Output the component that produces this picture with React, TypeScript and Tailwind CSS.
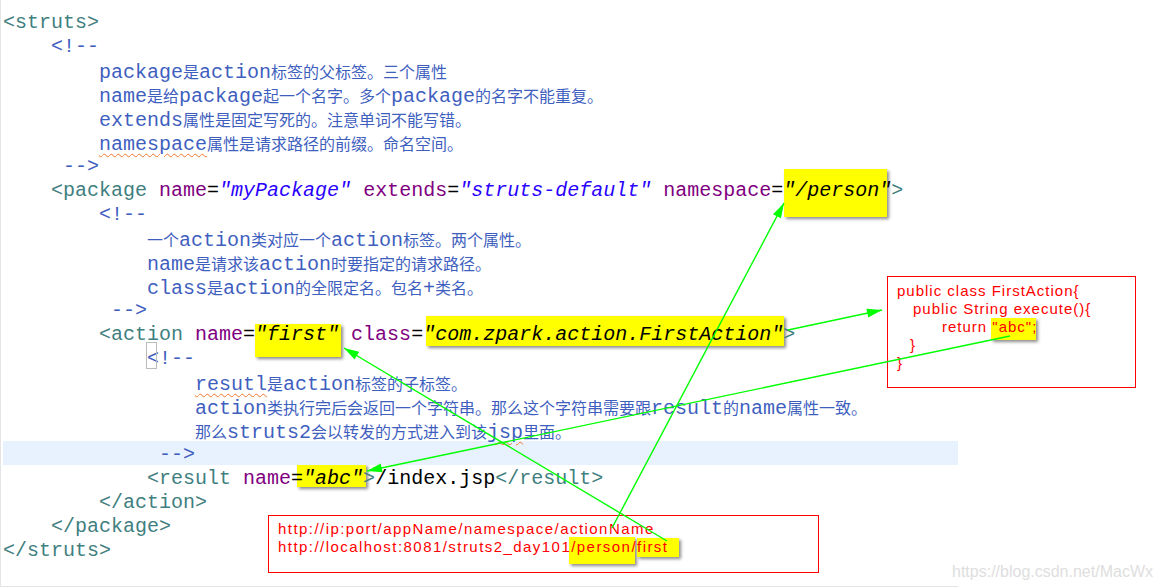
import React from "react";

const CJK = /([\u3000-\u303f\u4e00-\u9fff\uff00-\uffef]+)/;

function T({ children }: { children: React.ReactNode }) {
  return <span className="text-[#3f7f7f]">{children}</span>;
}

function A({ children }: { children: React.ReactNode }) {
  return <span className="text-[#7f007f]">{children}</span>;
}

function V({ children }: { children: React.ReactNode }) {
  return <span className="italic text-[#2a00ff]">{children}</span>;
}

// comment text: ascii in mono, chinese runs in the CJK font at 16px
function Cm({ t, wavy }: { t: string; wavy?: boolean }) {
  const parts = t.split(CJK).filter(Boolean);
  return (
    <span
      className={
        wavy
          ? "text-[#3f5fbf] underline decoration-wavy decoration-[#f0782e] decoration-1 underline-offset-[3px]"
          : "text-[#3f5fbf]"
      }
    >
      {parts.map((p, k) =>
        CJK.test(p) ? (
          <span key={k} className="text-[16px] font-['Noto_Sans_CJK_SC']">
            {p}
          </span>
        ) : (
          <React.Fragment key={k}>{p}</React.Fragment>
        )
      )}
    </span>
  );
}

// yellow pasted highlight box sitting behind a piece of text
function Hi({ box, children }: { box: string; children: React.ReactNode }) {
  return (
    <span className="relative inline-block">
      <span className={"absolute -z-10 bg-[#ffff00] shadow-[2px_2px_3px_rgba(0,0,0,0.45)] " + box} />
      {children}
    </span>
  );
}

function Line({ i = 0, hl, children }: { i?: number; hl?: boolean; children?: React.ReactNode }) {
  return (
    <div className={hl ? "h-6 leading-[28px] whitespace-pre bg-[#e8f2fe]" : "h-6 leading-[28px] whitespace-pre"}>
      {" ".repeat(i)}
      {children}
    </div>
  );
}

function arrowHead(x1: number, y1: number, x2: number, y2: number, len = 15, w = 4.5) {
  const dx = x2 - x1;
  const dy = y2 - y1;
  const d = Math.hypot(dx, dy);
  const ux = dx / d;
  const uy = dy / d;
  const bx = x2 - ux * len;
  const by = y2 - uy * len;
  return `${x2},${y2} ${bx - uy * w},${by + ux * w} ${bx + uy * w},${by - ux * w}`;
}

const arrows = [
  [612, 528, 784, 203],
  [667, 541, 344, 348],
  [1010, 336, 367, 471],
  [788, 330, 882, 310],
];

export default function App() {
  return (
    <div className="relative isolate w-[1159px] h-[587px] overflow-hidden bg-white">
      {/* editor */}
      <div className="w-[958px] h-[587px] border-l border-b border-[#e4e4e4] pl-[2px] pt-[9px] font-['Liberation_Mono','Noto_Sans_CJK_SC',monospace] text-[20px] text-black">
        <Line>
          <T>&lt;struts&gt;</T>
        </Line>
        <Line i={4}>
          <Cm t="<!--" />
        </Line>
        <Line i={8}>
          <Cm t="package是action标签的父标签。三个属性" />
        </Line>
        <Line i={8}>
          <Cm t="name是给package起一个名字。多个package的名字不能重复。" />
        </Line>
        <Line i={8}>
          <Cm t="extends属性是固定写死的。注意单词不能写错。" />
        </Line>
        <Line i={8}>
          <Cm t="namespace" wavy />
          <Cm t="属性是请求路径的前缀。命名空间。" />
        </Line>
        <Line i={5}>
          <Cm t="-->" />
        </Line>
        <Line i={4}>
          <T>&lt;package</T> <A>name</A>=<V>"myPackage"</V> <A>extends</A>=<V>"struts-default"</V> <A>namespace</A>=
          <Hi box="left-px -top-[8px] w-[103px] h-[48px]">
            <span className="italic">"/person"</span>
          </Hi>
          <T>&gt;</T>
        </Line>
        <Line i={8}>
          <Cm t="<!--" />
        </Line>
        <Line i={12}>
          <Cm t="一个action类对应一个action标签。两个属性。" />
        </Line>
        <Line i={12}>
          <Cm t="name是请求该action时要指定的请求路径。" />
        </Line>
        <Line i={12}>
          <Cm t="class是action的全限定名。包名+类名。" />
        </Line>
        <Line i={9}>
          <Cm t="-->" />
        </Line>
        <Line i={8}>
          <T>&lt;action</T> <A>name</A>=
          <Hi box="left-0 top-[3px] w-[86px] h-[33px]">
            <span className="italic">"first"</span>
          </Hi>{" "}
          <A>class</A>=
          <Hi box="left-[3px] -top-[5px] w-[358px] h-[30px]">
            <span className="italic">"com.zpark.action.FirstAction"</span>
          </Hi>
          <T>&gt;</T>
        </Line>
        <Line i={12}>
          <span className="relative inline-block text-[#3f5fbf]">
            <span className="absolute -left-px top-[-3px] w-[11px] h-[27px] border border-[#bcbcbc]" />
            &lt;
          </span>
          <Cm t="!--" />
        </Line>
        <Line i={16}>
          <Cm t="resutl" wavy />
          <Cm t="是action标签的子标签。" />
        </Line>
        <Line i={16}>
          <Cm t="action类执行完后会返回一个字符串。那么这个字符串需要跟result的name属性一致。" />
        </Line>
        <Line i={16}>
          <Cm t="那么struts2会以转发的方式进入到该" />
          <Cm t="jsp" wavy />
          <Cm t="里面。" />
        </Line>
        <Line i={13} hl>
          <Cm t="-->" />
        </Line>
        <Line i={12}>
          <T>&lt;result</T> <A>name</A>=
          <Hi box="-left-[6px] -top-px w-[69px] h-[23px]">
            <span className="italic">"abc"</span>
          </Hi>
          <T>&gt;</T>/index.jsp<T>&lt;/result&gt;</T>
        </Line>
        <Line i={8}>
          <T>&lt;/action&gt;</T>
        </Line>
        <Line i={4}>
          <T>&lt;/package&gt;</T>
        </Line>
        <Line>
          <T>&lt;/struts&gt;</T>
        </Line>
      </div>

      {/* annotation: action class */}
      <div className="absolute left-[887px] top-[276px] w-[249px] h-[112px] border border-[#ff0000] pl-[9px] pt-[5px] font-['Liberation_Sans',sans-serif] text-[15px] leading-[18px] tracking-[1px] text-[#ff0000] whitespace-pre">
        <div>public class FirstAction{"{"}</div>
        <div className="pl-[16px]">public String execute(){"{"}</div>
        <div className="pl-[45px]">
          return{" "}
          <Hi box="-left-px top-0 w-[45px] h-[22px]">"abc"</Hi>;
        </div>
        <div className="pl-[13px]">{"}"}</div>
        <div>{"}"}</div>
      </div>

      {/* annotation: url */}
      <div className="absolute left-[268px] top-[515px] w-[551px] h-[58px] border border-[#ff0000] pl-[9px] pt-[4px] font-['Liberation_Sans',sans-serif] text-[15px] leading-[18px] tracking-[1.45px] text-[#ff0000] whitespace-pre">
        <div>http://ip:port/appName/namespace/actionName</div>
        <div>
          http://localhost:8081/struts2_day101
          <Hi box="-left-[2px] -top-px w-[66px] h-[27px]">/person</Hi>
          {"/"}
          <Hi box="left-0 top-0 w-[42px] h-[19px]">first</Hi>
        </div>
      </div>

      <div className="absolute left-[952px] top-[562px] font-['Liberation_Sans',sans-serif] text-[16px] leading-[20px] text-[#dedede]">
        https://blog.csdn.net/MacWx
      </div>

      <svg className="absolute left-0 top-0 pointer-events-none" width="1159" height="587">
        {arrows.map(([x1, y1, x2, y2], k) => (
          <g key={k}>
            <line x1={x1} y1={y1} x2={x2} y2={y2} stroke="#00ff00" strokeWidth="1.4" />
            <polygon points={arrowHead(x1, y1, x2, y2)} fill="#00ff00" />
          </g>
        ))}
      </svg>
    </div>
  );
}
